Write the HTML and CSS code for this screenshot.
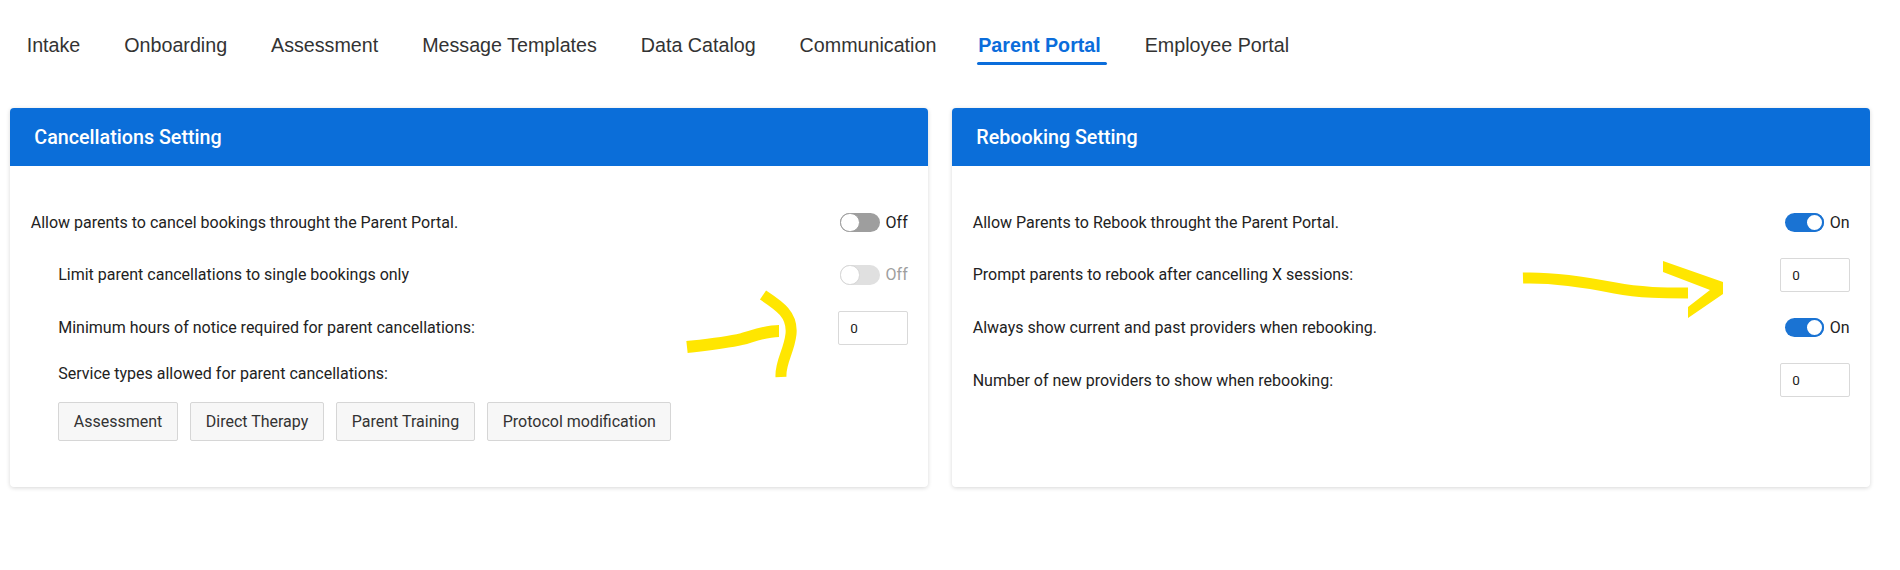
FILE: index.html
```html
<!DOCTYPE html>
<html lang="en">
<head>
<meta charset="utf-8">
<title>Parent Portal Settings</title>
<link rel="stylesheet" href="styles.css">
</head>
<body>
<div class="page">
  <nav class="tabs">
    <a class="tab">Intake</a>
    <a class="tab">Onboarding</a>
    <a class="tab">Assessment</a>
    <a class="tab">Message Templates</a>
    <a class="tab">Data Catalog</a>
    <a class="tab">Communication</a>
    <a class="tab active">Parent Portal</a>
    <a class="tab">Employee Portal</a>
  </nav>

  <div class="cards">
    <section class="card">
      <header class="card-header">Cancellations Setting</header>
      <div class="card-body">
        <div class="row">
          <span class="label">Allow parents to cancel bookings throught the Parent Portal.</span>
          <span class="switch"><span class="track off"><span class="knob"></span></span><span class="state">Off</span></span>
        </div>
        <div class="row nested">
          <span class="label">Limit parent cancellations to single bookings only</span>
          <span class="switch disabled"><span class="track off"><span class="knob"></span></span><span class="state">Off</span></span>
        </div>
        <div class="row nested">
          <span class="label">Minimum hours of notice required for parent cancellations:</span>
          <span class="num-input">0</span>
        </div>
        <div class="nested service-label">Service types allowed for parent cancellations:</div>
        <div class="nested chips">
          <span class="chip">Assessment</span>
          <span class="chip">Direct Therapy</span>
          <span class="chip">Parent Training</span>
          <span class="chip">Protocol modification</span>
        </div>
      </div>
    </section>

    <section class="card">
      <header class="card-header">Rebooking Setting</header>
      <div class="card-body">
        <div class="row">
          <span class="label">Allow Parents to Rebook throught the Parent Portal.</span>
          <span class="switch"><span class="track on"><span class="knob"></span></span><span class="state">On</span></span>
        </div>
        <div class="row">
          <span class="label">Prompt parents to rebook after cancelling X sessions:</span>
          <span class="num-input">0</span>
        </div>
        <div class="row">
          <span class="label">Always show current and past providers when rebooking.</span>
          <span class="switch"><span class="track on"><span class="knob"></span></span><span class="state">On</span></span>
        </div>
        <div class="row">
          <span class="label">Number of new providers to show when rebooking:</span>
          <span class="num-input">0</span>
        </div>
      </div>
    </section>
  </div>

  <svg class="annotations" width="1900" height="570" viewBox="0 0 1900 570" aria-hidden="true">
    <g fill="none" stroke="#ffe600" stroke-linecap="butt" stroke-linejoin="round">
      <path d="M687 347 C705 345, 725 343, 742 339 C756 335, 766 331, 779 331" stroke-width="12"/>
      <path d="M763 295 C778 305, 793 314, 791 334 C789 352, 780 362, 781 377" stroke-width="11"/>
      <path d="M1523 278 C1555 277, 1585 282, 1615 288 C1640 293, 1665 293, 1688 293" stroke-width="11"/>
    </g>
    <polygon fill="#ffe600" points="1663,261 1723,282 1723,294 1688,318 1688,307 1710,290 1663,272"/>
  </svg>
</div>
</body>
</html>
```

FILE: styles.css
```css
html, body {
  margin: 0;
  padding: 0;
  background: #ffffff;
}

.page {
  position: relative;
  width: 1900px;
  height: 570px;
  font-family: Roboto, "Liberation Sans", Arial, sans-serif;
  color: #222222;
}

.tabs {
  display: flex;
  gap: 31.9px;
  padding: 34px 0 0 20.7px;
  font-family: "Liberation Sans", Arial, sans-serif;
  font-size: 19.7px;
}

.tab {
  display: block;
  padding: 0 6px;
  line-height: 22px;
  color: #333333;
  cursor: pointer;
}

.tab::after {
  content: "";
  display: block;
  height: 3px;
  margin-top: 6px;
  border-radius: 2px;
  background: transparent;
}

.tab.active {
  color: #0b6ddb;
  font-weight: bold;
  margin-left: -2px;
}

.tab.active::after {
  background: #0b6ddb;
  margin-left: -1px;
  margin-right: -6px;
}

.cards {
  display: grid;
  grid-template-columns: 918px 918px;
  gap: 24px;
  margin: 43px 0 0 10px;
}

.card {
  background: #ffffff;
  border-radius: 4px;
  box-shadow: 0 1px 4px rgba(0, 0, 0, 0.16);
  overflow: hidden;
  display: flex;
  flex-direction: column;
}

.card-header {
  height: 58px;
  display: flex;
  align-items: center;
  padding-left: 24.3px;
  background: #0b6ed9;
  color: #ffffff;
  font-size: 19.7px;
  font-weight: 500;
}

.card-body {
  flex: 1;
  padding: 39.3px 20.3px 46.4px 20.7px;
  display: flex;
  flex-direction: column;
  gap: 18.7px;
  font-size: 16px;
}

.row {
  display: flex;
  align-items: center;
  justify-content: space-between;
  min-height: 34px;
}

.nested {
  margin-left: 27.5px;
}

.switch {
  display: flex;
  align-items: center;
  gap: 6px;
  font-size: 16px;
  color: #222222;
}

.track {
  display: flex;
  width: 39.3px;
  height: 19.3px;
  border-radius: 10px;
  box-sizing: border-box;
}

.track.off {
  background: #9e9e9e;
  justify-content: flex-start;
}

.track.on {
  background: #1a73d3;
  justify-content: flex-end;
}

.knob {
  width: 19.3px;
  height: 19.3px;
  border-radius: 50%;
  background: #ffffff;
  box-sizing: border-box;
  border: 1.5px solid #9e9e9e;
}

.track.on .knob {
  border: 2px solid #1a73d3;
}

.switch.disabled .track.off {
  background: #e0e0e0;
}

.switch.disabled .knob {
  border-color: #d5d5d5;
}

.switch.disabled .state {
  color: #9e9e9e;
}

.num-input {
  box-sizing: border-box;
  width: 69.4px;
  height: 34px;
  border: 1px solid #d9d9d9;
  border-radius: 2px;
  padding-left: 11px;
  display: flex;
  align-items: center;
  font-size: 13.5px;
  color: #222222;
  background: #ffffff;
}

.service-label {
  line-height: 22px;
}

.chips {
  display: flex;
  gap: 12.5px;
  margin-top: -2.5px;
}

.chip {
  display: flex;
  align-items: center;
  height: 39px;
  box-sizing: border-box;
  padding: 0 14.5px;
  border: 1px solid #d6d6d6;
  border-radius: 2px;
  background: #f7f7f7;
  color: #333333;
  font-size: 16px;
}

.annotations {
  position: absolute;
  top: 0;
  left: 0;
  pointer-events: none;
}
```
